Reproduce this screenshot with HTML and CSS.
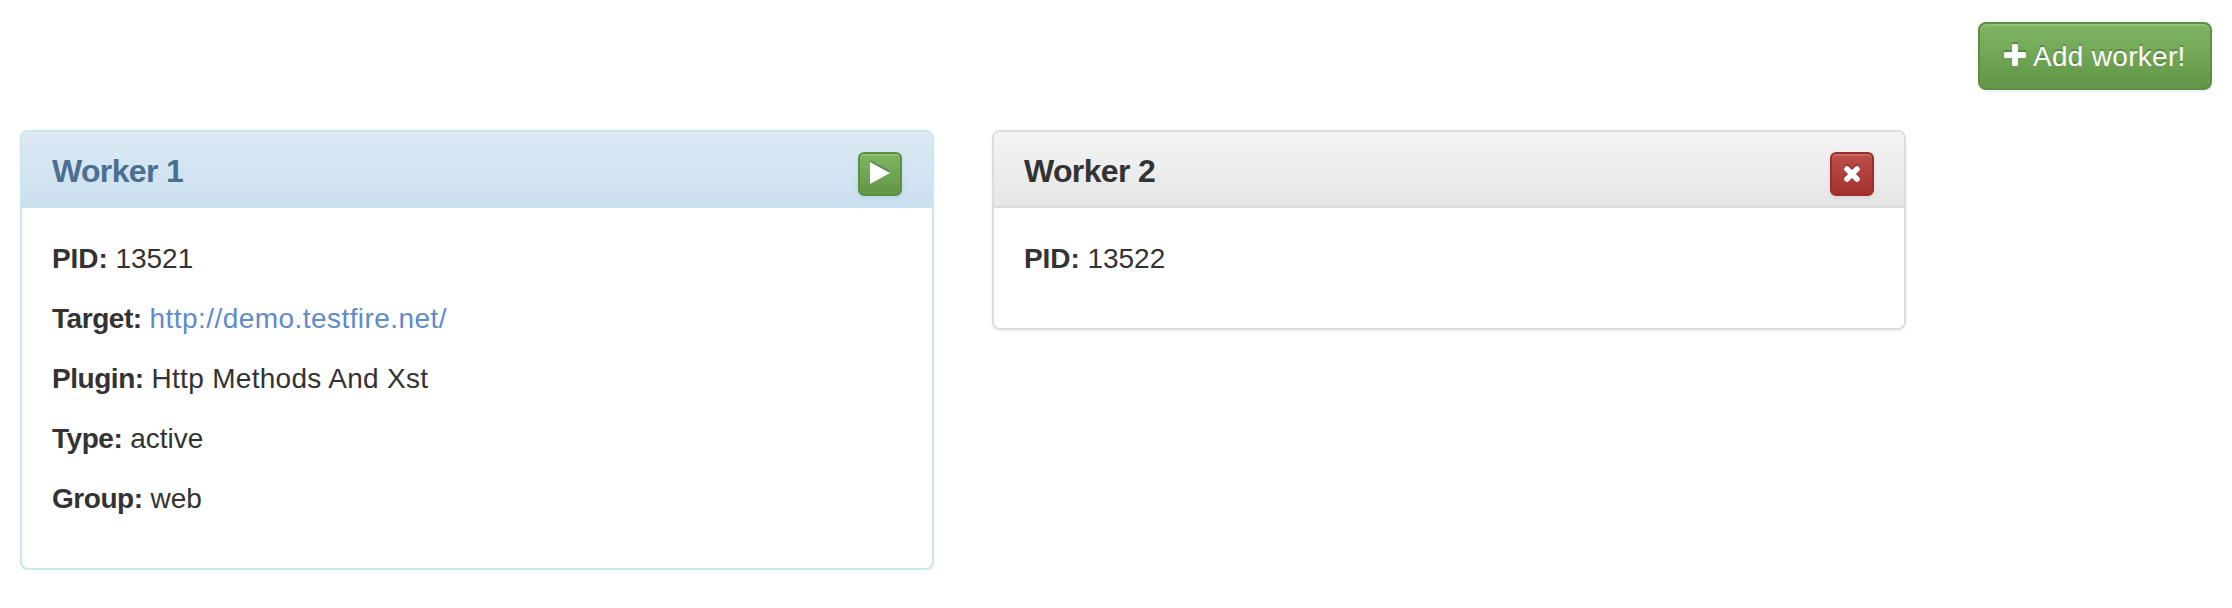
FILE: index.html
```html
<!DOCTYPE html>
<html lang="en">
<head>
<meta charset="utf-8">
<title>Workers</title>
<link rel="stylesheet" href="styles.css">
</head>
<body>
<div class="toolbar">
  <button class="btn btn-success btn-add"><svg class="icon-plus" viewBox="0 0 22 22"><path d="M9.500 0h3q1.500 0 1.500 1.500V8h6.500q1.500 0 1.500 1.500v3q0 1.500-1.500 1.500H14v6.500q0 1.500-1.500 1.500h-3q-1.500 0-1.500-1.500V14H1.500q-1.500 0-1.500-1.500v-3q0-1.500 1.500-1.500H8V1.500q0-1.500 1.500-1.500z"/></svg><span class="btn-label">Add worker!</span></button>
</div>
<main class="workers">
  <section class="panel panel-info">
    <header class="panel-heading">
      <h3 class="panel-title">Worker 1</h3>
      <button class="btn btn-success btn-small" aria-label="Start"><svg class="icon-play" viewBox="0 0 20 22"><path d="M0 0L20 11L0 22z"/></svg></button>
    </header>
    <div class="panel-body">
      <p><strong class="short">PID:</strong> <span>13521</span></p>
      <p><strong>Target:</strong> <a class="link" href="#">http://demo.testfire.net/</a></p>
      <p><strong>Plugin:</strong> <span class="plugin">Http Methods And Xst</span></p>
      <p><strong>Type:</strong> <span>active</span></p>
      <p><strong>Group:</strong> <span>web</span></p>
    </div>
  </section>
  <section class="panel panel-default">
    <header class="panel-heading">
      <h3 class="panel-title">Worker 2</h3>
      <button class="btn btn-danger btn-small" aria-label="Stop"><svg class="icon-remove" viewBox="0 0 16 16"><path d="M3 3L13 13M13 3L3 13"/></svg></button>
    </header>
    <div class="panel-body">
      <p><strong class="short">PID:</strong> <span>13522</span></p>
    </div>
  </section>
</main>
</body>
</html>
```
FILE: styles.css
```css
* { box-sizing: border-box; }
body {
  margin: 0;
  padding: 22px 20px 0;
  background: #fff;
  color: #333;
  font: 28px/40px "Liberation Sans", Arial, sans-serif;
}
.toolbar { display: flex; justify-content: flex-end; margin-bottom: 40px; }
.workers { display: grid; grid-template-columns: 914px 914px; column-gap: 58px; align-items: start; }
.btn {
  display: flex;
  align-items: center;
  color: #fff;
  font: inherit;
  border: 2px solid;
  border-radius: 8px;
  text-shadow: 0 -2px 0 rgba(0, 0, 0, .2);
  box-shadow: inset 0 2px 0 rgba(255, 255, 255, .15), 0 2px 4px rgba(0, 0, 0, .075);
}
.btn svg { display: block; fill: #fff; filter: drop-shadow(0 -2px 0 rgba(0, 0, 0, .2)); }
.btn-success { background: linear-gradient(#80b763, #609446) border-box; border-color: #5c8f43; }
.btn-danger { background: linear-gradient(#c0504d, #a3302c) border-box; border-color: #9c2e2a; }
.btn-add { width: 234px; height: 68px; padding: 0 24px; gap: 7px; }
.btn-label { padding-top: 1px; letter-spacing: .3px; white-space: nowrap; }
.btn-small { width: 44px; height: 44px; padding: 0; border-radius: 6px; justify-content: center; }
.icon-plus { width: 22px; height: 22px; margin-bottom: 2px; }
.icon-play { width: 20px; height: 22px; margin-bottom: 2px; }
.icon-remove { width: 16px; height: 16px; }
.icon-remove path { stroke: #fff; stroke-width: 5.500; stroke-linecap: round; }
.panel {
  border: 2px solid;
  border-radius: 8px;
  box-shadow: 0 2px 4px rgba(0, 0, 0, .05);
}
.panel-info { border-color: #c8e7ef; }
.panel-default { border-color: #dcdcdc; }
.panel-heading {
  display: flex;
  justify-content: space-between;
  height: 76px;
  padding: 20px 30px 0;
  border-bottom: 2px solid;
  border-color: inherit;
  border-radius: 6px 6px 0 0;
}
.panel-info .panel-heading { color: #4b708f; background: linear-gradient(#dceaf4, #cbe0f0); border-color: #c8e3ef; }
.panel-default .panel-heading { background: linear-gradient(#f4f4f4, #e6e6e6); }
.panel-title { margin: 0; font-size: 32px; line-height: 38px; font-weight: 700; letter-spacing: -.65px; }
.panel-body { padding: 31px 30px 29px; }
.panel-body p { margin: 0 0 20px; white-space: nowrap; }
.panel-body strong { letter-spacing: -.45px; }
.panel-body .short { letter-spacing: -.1px; }
.link { color: #5f8bc9; text-decoration: none; letter-spacing: .45px; }
.plugin { letter-spacing: .3px; }
```
